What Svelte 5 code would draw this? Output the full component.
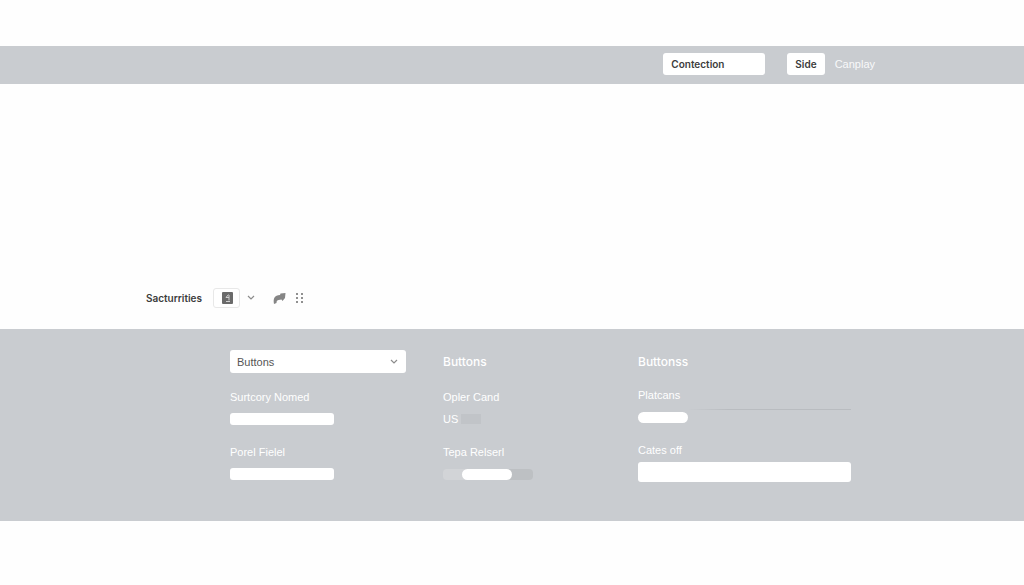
<script>
  let query = $state('Contection');
  let group = $state('Buttons');
  let region = $state('US');
  let name = $state('');
  let field = $state('');
  let cates = $state('');
  let tape = $state(48);
  let plat = $state(0);
</script>

<div class="page">
  <header class="topbar">
    <input class="search" type="text" aria-label="Contection" bind:value={query} />
    <nav>
      <button class="side" type="button">Side</button>
      <a href="#canplay">Canplay</a>
    </nav>
  </header>

  <main>
    <div class="toolbar">
      <span class="title">Sacturrities</span>
      <button class="swatch" type="button" aria-label="Layout">
        <svg width="12" height="12" viewBox="0 0 12 12">
          <rect x="1" y="0" width="11" height="12" rx="1" fill="#6a6a6a" />
          <path d="M7.5 2.5 5 5.5h3M8 3v5.5M5 9.5h4" fill="none" stroke="#d0d0d0" stroke-width="1" />
        </svg>
      </button>
      <button class="icon" type="button" aria-label="More layouts">
        <svg width="8" height="6" viewBox="0 0 8 6">
          <path d="M1 1l3 3 3-3" fill="none" stroke="#8c8c8c" stroke-width="1.2" />
        </svg>
      </button>
      <button class="icon share" type="button" aria-label="Share">
        <svg width="13" height="12" viewBox="0 0 13 12">
          <path d="M1 12C0 6 1.500 3.500 7 3l.5-1.500L12.500 1 12 6 9.500 9 8.500 7.500 5.500 8C3.500 8.500 3.500 10 3.500 11z" fill="#858585" />
        </svg>
      </button>
      <button class="icon grip" type="button" aria-label="Drag">
        <svg width="9" height="10" viewBox="0 0 9 10" fill="#909090">
          <path d="M1 0h2v2H1zM6 0h2v2H6zM1 4h2v2H1zM6 4h2v2H6zM1 8h2v2H1zM6 8h2v2H6z" />
        </svg>
      </button>
    </div>
  </main>

  <section class="panel">
    <div class="col">
      <div class="select-wrap">
        <select class="group" aria-label="Group" bind:value={group}>
          <option>Buttons</option>
        </select>
        <svg width="8" height="6" viewBox="0 0 8 6">
          <path d="M1 1l3 3 3-3" fill="none" stroke="#8c8c8c" stroke-width="1.2" />
        </svg>
      </div>
      <label for="name">Surtcory Nomed</label>
      <div class="control"><input id="name" class="short" type="text" bind:value={name} /></div>
      <label for="field">Porel Fielel</label>
      <div class="control"><input id="field" class="short" type="text" bind:value={field} /></div>
    </div>

    <div class="col">
      <h2>Buttons</h2>
      <label for="region">Opler Cand</label>
      <div class="control">
        <select id="region" class="region" bind:value={region}>
          <option>US</option>
        </select>
      </div>
      <label for="tape">Tepa Relserl</label>
      <div class="control"><input id="tape" class="tape" type="range" bind:value={tape} /></div>
    </div>

    <div class="col last">
      <h2>Buttonss</h2>
      <label for="plat">Platcans</label>
      <div class="control"><input id="plat" class="plat" type="range" bind:value={plat} /></div>
      <label for="cates">Cates off</label>
      <div class="control"><input id="cates" class="wide" type="text" bind:value={cates} /></div>
    </div>
  </section>
</div>

<style>
  :global(body) { background: #fefefe; }

  .page {
    padding: 46px 0 64px;
    font-family: "Liberation Sans", Arial, sans-serif;
    font-size: 11px;
    color: #3c3c3c;
  }
  .page * { box-sizing: border-box; }
  button, input, select { margin: 0; padding: 0; border: 0; font: inherit; color: inherit; }
  svg { display: block; }

  .topbar {
    display: flex;
    align-items: center;
    justify-content: flex-end;
    gap: 22px;
    padding: 7px 149px 9px 24px;
    background: #c9ccd0;
  }
  .topbar nav { display: flex; align-items: center; gap: 10px; }
  .topbar a { color: #f8f9fa; text-decoration: none; }
  .search, .side {
    height: 22px;
    background: #fff;
    border-radius: 3px;
    font-family: Inter, "Liberation Sans", sans-serif;
    font-size: 10px;
    font-weight: 600;
  }
  .search { width: 102px; padding: 0 8px; }
  .side { padding: 0 8px; }

  main {
    display: flex;
    align-items: flex-end;
    min-height: 245px;
    padding: 0 24px 21px 146px;
  }
  .toolbar { display: flex; align-items: center; }
  .title { font-family: Inter, "Liberation Sans", sans-serif; font-weight: 600; font-size: 10px; }
  .swatch {
    display: flex;
    align-items: center;
    justify-content: center;
    width: 27px;
    height: 20px;
    margin-left: 11px;
    background: #fff;
    border: 1px solid #e8e8e8;
    border-radius: 3px;
  }
  .icon { margin-left: 7px; background: none; }
  .share { margin-left: 18px; }
  .grip { margin-left: 9px; }

  .panel {
    display: grid;
    grid-template-columns: 176fr 158fr 213fr;
    gap: 37px;
    padding: 21px 173px 36px 230px;
    background: #c9ccd0;
    color: #fff;
  }
  .col { display: flex; flex-direction: column; }
  .col label { height: 16px; margin-top: 16px; line-height: 16px; }
  .control { display: flex; align-items: center; height: 22px; margin-top: 3px; }
  .col label ~ label { margin-top: 14px; }
  .col.last label { margin-top: 14px; }
  h2 {
    height: 23px;
    margin: 0;
    font-family: Inter, "Liberation Sans", sans-serif;
    font-size: 12px;
    font-weight: 500;
    line-height: 23px;
  }

  .select-wrap { display: grid; align-items: center; }
  .select-wrap > * { grid-area: 1 / 1; }
  .select-wrap svg { justify-self: end; margin-right: 8px; pointer-events: none; }
  .group {
    appearance: none;
    width: 100%;
    height: 23px;
    padding: 0 7px;
    background: #fff;
    border-radius: 3px;
    color: #555;
  }
  .short, .wide { background: #fff; border-radius: 3px; }
  .short { width: 104px; height: 12px; }
  .wide { width: 100%; height: 20px; }
  .region {
    appearance: none;
    width: 38px;
    height: 16px;
    background: linear-gradient(#c1c4c8, #c1c4c8) right center / 20px 10px no-repeat;
  }

  input[type='range'] { appearance: none; height: 11px; }
  input[type='range']::-webkit-slider-thumb {
    appearance: none;
    width: 50px;
    height: 11px;
    border-radius: 6px;
    background: #fff;
  }
  .tape {
    width: 90px;
    border-radius: 4px;
    background: linear-gradient(90deg, #d2d4d7 50%, #bdc0c3 50%);
  }
  /* hairline runs above the thumb, fading in from its right edge */
  .col .plat {
    width: 100%;
    height: 17px;
    background: linear-gradient(90deg, transparent 50px, #b9bcc0 90px) top / 100% 1px no-repeat;
  }
</style>
